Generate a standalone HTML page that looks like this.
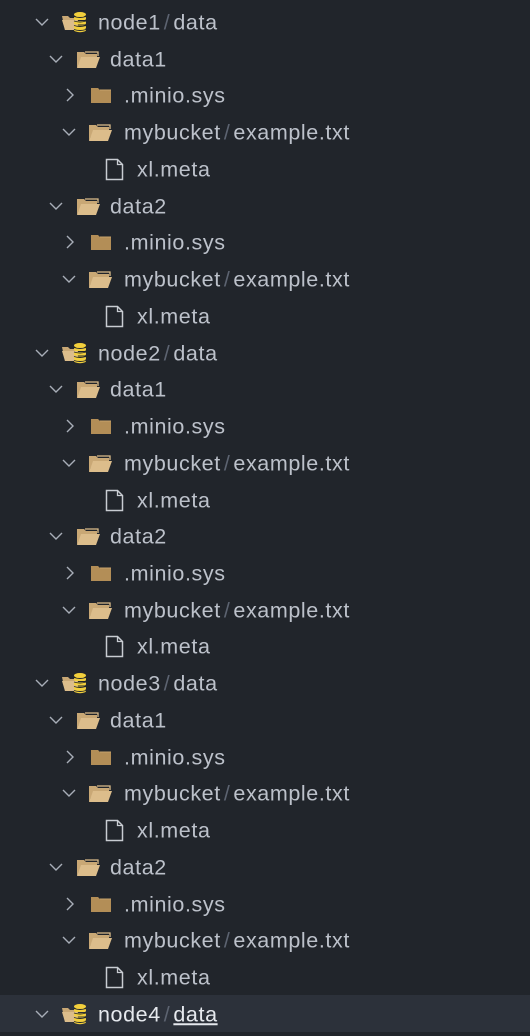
<!DOCTYPE html>
<html><head><meta charset="utf-8"><style>
html,body{margin:0;padding:0;background:#21252b;width:530px;height:1036px;overflow:hidden}
#t{position:relative;padding-top:3.6px}
.r{position:relative;height:36.74px;font-family:"Liberation Sans",sans-serif;font-size:21.5px;letter-spacing:0.6px;color:#bcc1ca}
.r.sel{background:#2c313a;color:#e6e9ee}
.r svg{position:absolute;top:50%}
.r .tx{position:absolute;top:50%;transform:translateY(-47%);white-space:nowrap}
.s{color:#5c6370;margin:0 3px}
.u{text-decoration:underline}
</style></head><body><div id="t">
<script>
const chevD='<svg width="14" height="8" viewBox="0 0 14 8" style="margin-top:-4px;left:LEFTpx"><path d="M1 1l6 6 6-6" fill="none" stroke="#a8aeb8" stroke-width="1.4"/></svg>';
const chevR='<svg width="8" height="14" viewBox="0 0 8 14" style="margin-top:-7px;left:LEFTpx"><path d="M1 1l6 6-6 6" fill="none" stroke="#a8aeb8" stroke-width="1.4"/></svg>';
const open='<svg width="25" height="19" viewBox="0 0 25 19" style="margin-top:-9px;left:LEFTpx"><path d="M1 2h7l2 2h11v4H5L1 18z" fill="#c9a875"/><path d="M5 7h19l-4 11H1z" fill="#dcbd8b"/><path d="M9 2h13v4" fill="none" stroke="#dcbd8b" stroke-width="1.3"/></svg>';
const closed='<svg width="22" height="17" viewBox="0 0 22 17" style="margin-top:-8px;left:LEFTpx"><path d="M1 1h7l2 2h11v13H1z" fill="#b38e57"/><path d="M10 3h11" stroke="#c7a26b" stroke-width="1"/></svg>';
const file='<svg width="19" height="23" viewBox="0 0 19 23" style="margin-top:-11px;left:LEFTpx"><path d="M1.5 1.5h11l5 5v15h-16z" fill="none" stroke="#c8ccd2" stroke-width="1.5"/><path d="M12.5 1.5v5h5" fill="none" stroke="#c8ccd2" stroke-width="1.3"/></svg>';
const db='<svg width="27" height="22" viewBox="0 0 27 22" style="margin-top:-11px;left:LEFTpx"><path d="M1 5h6l2 2h8v12H4z" fill="#c9a875"/><path d="M1 9h15v10H4z" fill="#dcbd8b"/><g fill="#f2cf3c"><ellipse cx="19" cy="3.5" rx="6" ry="2.5"/><rect x="13" y="5.5" width="12" height="3.5" rx="1.5"/><rect x="13" y="10" width="12" height="3.5" rx="1.5"/><rect x="13" y="14.5" width="12" height="3.5" rx="1.5"/><ellipse cx="19" cy="19" rx="6" ry="2.2"/></g><g stroke="#21252b" stroke-width="0.9"><path d="M13 5.5q6 2 12 0M13 10q6 2 12 0M13 14.5q6 2 12 0M13 18.5q6 2 12 0" fill="none"/></g></svg>';
function ic(s,l){return s.replace('LEFT',l)}
let h='';
function row(html,cls){h+='<div class="r'+(cls?' '+cls:'')+'">'+html+'</div>'}
for(let n=1;n<=4;n++){
  row(ic(chevD,35)+ic(db,61)+'<span class="tx" style="left:98px">node'+n+'<span class="s">/</span>'+(n==4?'<span class="u">data</span>':'data')+'</span>',n==4?'sel':'');
  if(n==4)break;
  for(let d=1;d<=2;d++){
    row(ic(chevD,49)+ic(open,76)+'<span class="tx" style="left:110px">data'+d+'</span>');
    row(ic(chevR,66)+ic(closed,90)+'<span class="tx" style="left:124px">.minio.sys</span>');
    row(ic(chevD,62)+ic(open,88)+'<span class="tx" style="left:124px">mybucket<span class="s">/</span>example.txt</span>');
    row(ic(file,105)+'<span class="tx" style="left:137px">xl.meta</span>');
  }
}
document.getElementById('t').innerHTML=h;
</script>
</div></body></html>
